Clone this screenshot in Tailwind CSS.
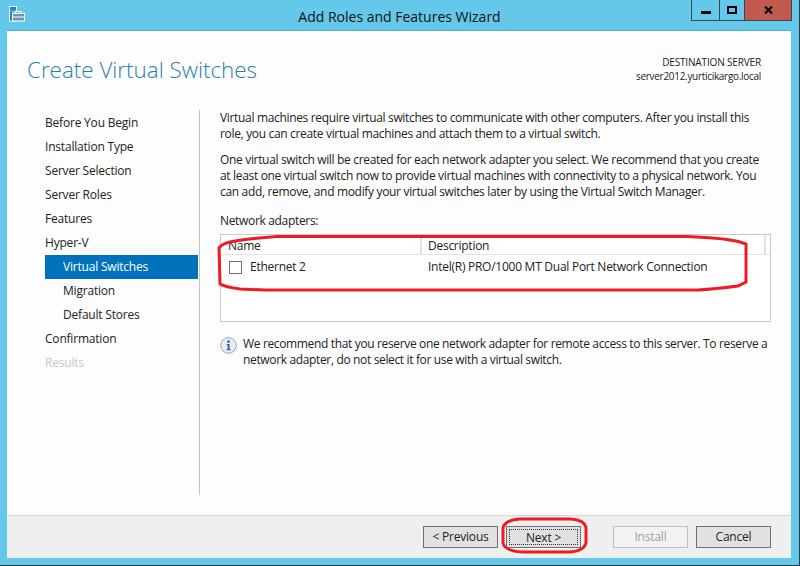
<!DOCTYPE html>
<html lang="en">
<head>
    <meta charset="UTF-8">
    <meta name="viewport" content="width=device-width, initial-scale=1.0">
    <title>Add Roles and Features Wizard</title>
    <script src="https://cdn.jsdelivr.net/npm/@tailwindcss/browser@4"></script>
</head>
<body class="bg-[#63c8ea]">
    <div class="relative w-[800px] h-[566px] overflow-hidden flex flex-col bg-[#63c8ea] border-r border-b border-[#2f3a40] font-['Open_Sans','Noto_Sans',sans-serif] text-[12px] text-[#222] tracking-[-0.2px]">

        <!-- Title bar -->
        <div class="relative h-[30px] shrink-0 flex justify-center items-start">
            <svg class="absolute left-[9px] top-[6px]" width="17" height="16" viewBox="0 0 17 16">
                <rect x="0.5" y="0.5" width="7" height="14.5" fill="#63c8ea" stroke="#fff"/>
                <rect x="1" y="1" width="6" height="3.5" fill="#2b7fc4"/>
                <rect x="1" y="5.5" width="2" height="9" fill="#2b7fc4"/>
                <rect x="3.5" y="7.5" width="12" height="7.5" fill="#6f93ad" stroke="#fff"/>
                <rect x="6.5" y="5.5" width="6" height="2" fill="#63c8ea" stroke="#fff"/>
                <rect x="4" y="10.5" width="11" height="1" fill="#fff"/>
            </svg>
            <span class="mt-[6px] text-[14px] text-[#111] tracking-normal">Add Roles and Features Wizard</span>
            <div class="absolute right-[7px] top-0 flex h-[21px] border border-t-0 border-[#444]">
                <div class="w-[28px] flex items-center justify-center border-r border-[#444]"><div class="w-[10px] h-[3px] mt-[4px] bg-black"></div></div>
                <div class="w-[25px] flex items-center justify-center border-r border-[#444]"><div class="w-[10px] h-[8px] border-2 border-black"></div></div>
                <div class="w-[46px] flex items-center justify-center bg-[#c15b50]">
                    <svg width="9" height="8" viewBox="0 0 9 8"><path d="M1 0.5 L8 7.5 M8 0.5 L1 7.5" stroke="#000" stroke-width="2.2"/></svg>
                </div>
            </div>
        </div>

        <!-- Client area -->
        <div class="mx-[7px] w-[784px] h-[528px] shrink-0 flex flex-col bg-[#fdfdfd] border-t border-[#5aa5bf]">
            <!-- Header -->
            <div class="h-[79px] shrink-0 flex justify-between pl-[20px] pr-[30px]">
                <h1 class="mt-[22px] text-[22.4px] leading-[34px] font-light text-[#2b7fae] tracking-normal">Create Virtual Switches</h1>
                <div class="mt-[24px] text-right text-[10px] leading-[14px] text-[#222] tracking-[-0.3px]">
                    <div class="tracking-[-0.15px]">DESTINATION SERVER</div>
                    <div>server2012.yurticikargo.local</div>
                </div>
            </div>

            <!-- Body -->
            <div class="h-[405px] shrink-0 flex">
                <nav class="w-[192px] shrink-0 pl-[38px] pr-[1px] pt-[1px] flex flex-col">
                    <div class="h-[24px] leading-[24px]">Before You Begin</div>
                    <div class="h-[24px] leading-[24px]">Installation Type</div>
                    <div class="h-[24px] leading-[24px]">Server Selection</div>
                    <div class="h-[24px] leading-[24px]">Server Roles</div>
                    <div class="h-[24px] leading-[24px]">Features</div>
                    <div class="h-[24px] leading-[24px]">Hyper-V</div>
                    <div class="h-[24px] leading-[24px] pl-[18px] bg-[#0072bc] text-white">Virtual Switches</div>
                    <div class="h-[24px] leading-[24px] pl-[18px]">Migration</div>
                    <div class="h-[24px] leading-[24px] pl-[18px]">Default Stores</div>
                    <div class="h-[24px] leading-[24px]">Confirmation</div>
                    <div class="h-[24px] leading-[24px] text-[#c8c8c8]">Results</div>
                </nav>
                <div class="w-px h-[385px] bg-[#c4c4c4] shrink-0"></div>
                <main class="w-[552px] ml-[20px] shrink-0 leading-[16px] tracking-[-0.33px]">
                    <p>Virtual machines require virtual switches to communicate with other computers. After you install this role, you can create virtual machines and attach them to a virtual switch.</p>
                    <p class="mt-[10px] w-[545px]">One virtual switch will be created for each network adapter you select. We recommend that you create at least one virtual switch now to provide virtual machines with connectivity to a physical network. You can add, remove, and modify your virtual switches later by using the Virtual Switch Manager.</p>
                    <p class="mt-[13px]">Network adapters:</p>
                    <div class="mt-[5px] w-[551px] h-[88px] border border-[#c9c9c9] bg-white tracking-[-0.26px]">
                        <div class="h-[20px] flex border-b border-[#e3e3e3]">
                            <div class="w-[201px] pl-[7px] pt-[1px] leading-[20px] border-r-2 border-[#e3e3e3]">Name</div>
                            <div class="w-[344px] pl-[6px] pt-[1px] leading-[20px] border-r-2 border-[#e3e3e3]">Description</div>
                        </div>
                        <div class="h-[24px] flex items-center">
                            <div class="w-[200px] flex items-center pl-[8px]">
                                <div class="w-[13px] h-[13px] border border-[#707070] bg-white"></div>
                                <span class="ml-[8px]">Ethernet 2</span>
                            </div>
                            <div class="pl-[7px]">Intel(R) PRO/1000 MT Dual Port Network Connection</div>
                        </div>
                    </div>
                    <div class="mt-[14px] flex w-[552px]">
                        <svg class="shrink-0 mt-[1px]" width="17" height="17" viewBox="0 0 17 17">
                            <circle cx="8.5" cy="8.5" r="7.8" fill="#e8edf5" stroke="#9aa3ad"/>
                            <circle cx="8.5" cy="4.6" r="1.3" fill="#2f62b0"/>
                            <path d="M6.8 7 H9.6 V12 H10.6 V13.2 H6.6 V12 H7.6 V8.2 H6.8 Z" fill="#2f62b0"/>
                        </svg>
                        <p class="ml-[6px] tracking-[-0.35px]">We recommend that you reserve one network adapter for remote access to this server. To reserve a network adapter, do not select it for use with a virtual switch.</p>
                    </div>
                </main>
            </div>

            <!-- Footer -->
            <div class="h-[43px] shrink-0 flex items-start pt-[10px] pl-[416px] bg-[#efefef] border-t border-[#d8d8d8]">
                <button class="w-[75px] h-[22px] border border-[#707070] bg-[#e1e1e1] text-[#222]">&lt; Previous</button>
                <button class="ml-[8px] w-[75px] h-[22px] border border-[#707070] bg-[#e1e1e1] text-[#222] p-[2px]"><span class="block h-full leading-[15px] border border-dotted border-[#333]">Next &gt;</span></button>
                <button class="ml-[32px] w-[75px] h-[22px] border border-[#c0c0c0] bg-[#f2f2f2] text-[#a0a0a0]">Install</button>
                <button class="ml-[8px] w-[75px] h-[22px] border border-[#707070] bg-[#e1e1e1] text-[#222]">Cancel</button>
            </div>
        </div>

        <!-- Red annotations drawn over the wizard -->
        <svg class="absolute left-0 top-0 pointer-events-none" width="800" height="566" viewBox="0 0 800 566" fill="none" stroke="#ed1c24" stroke-width="3">
            <path d="M277 236.5 L687 236.5 Q725 238 740 242 L746 244 L746 282 L738 286 Q715 289 698 290 L265 290 L240 289 Q225 287 220 284 L219 248 Q222 243 235 241 Q255 238 277 236.5 Z"/>
            <path d="M520 519 L570 519 Q585 520 586 528 L586 543 Q584 551 570 552 L522 552 Q505 551 503 543 L503 528 Q505 520 520 519 Z"/>
        </svg>
    </div>
</body>
</html>
